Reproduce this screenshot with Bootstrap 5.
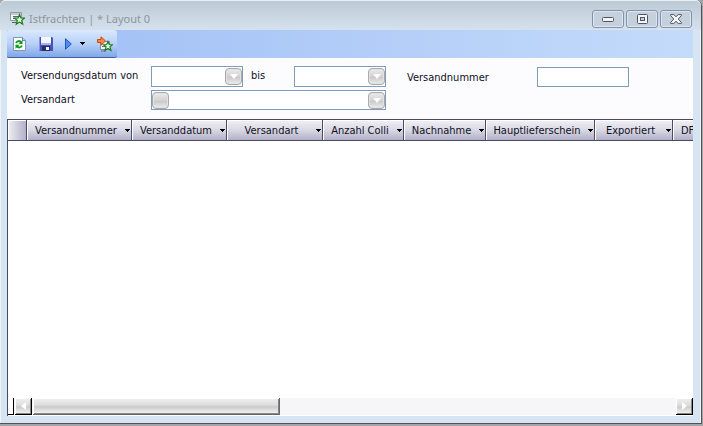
<!DOCTYPE html>
<html lang="de">
<head>
<meta charset="utf-8">
<meta name="viewport" content="width=device-width, initial-scale=1">
<title>Istfrachten</title>
<link href="https://cdn.jsdelivr.net/npm/bootstrap@5.3.0/dist/css/bootstrap.min.css" rel="stylesheet">
<style>
html,body{height:100%}
body{background:#a5a5a5;font:11px/14px "DejaVu Sans Condensed","Noto Sans",sans-serif;color:#10101c;padding:0 1px 2px 0}
svg{display:block;flex:none}
button{padding:0;border:0;background:none;color:inherit;font:inherit}
.win{background:#d7e4f1;border:solid #505256;border-width:0 1px 1px 0;border-radius:6px 6px 0 0;box-shadow:inset 1px 1px #edf3f8,inset -1px 0 #edf3f8;padding:0 8px 7px 7px}
.titlebar{height:30px;margin:0 -8px 0 -7px;padding:6px 9px 0 9px;background:linear-gradient(#bccad6,#d5e2ed);border-top:1px solid #e8eef3;border-radius:6px 6px 0 0}
.titlebar h1{font:11px/16px "Noto Sans",sans-serif;color:#8f959d}
.winbtns{gap:2px}
.winbtn{width:32px;height:18px;border:1px solid #8491ad;border-radius:3px;box-shadow:inset 0 0 0 1px #dce6ef;background:#c4d1dd}
.tools{height:28px;background:linear-gradient(90deg,#9fbef5,#c4dbfa)}
.strip{width:110px;height:28px;padding:0 4px;background:linear-gradient(#d9e8fd,#b8d1f8 50%,#80a7e7);border-bottom:1px solid #3b619c;border-radius:2px 3px 3px 2px}
.divider{width:1px;height:14px;background:#6a8ccb;box-shadow:1px 1px #fff}
.filters{height:61px;padding:8px 14px 0;background:#fcfcff}
.fgrid{display:grid;grid-template-columns:130px 92px 51px 92px;grid-template-rows:21px 20px;row-gap:3px}
.fgrid label{line-height:19px}
.bis{padding-left:8px}
.box{border:1px solid #7f9db9;background:#fff;min-width:0}
.box input{border:0;outline:0;min-width:0;width:100%;height:100%;padding:0 3px;background:none}
.wide{grid-column:2/5}
.chip{width:17px;height:17px;flex:none;border:1px solid #aaa;border-radius:4px;background:linear-gradient(#ececec,#d2d2d2 50%,#c6c6c6 51%,#eee);box-shadow:inset 0 0 0 1px #e2e2e2}
.num{margin-left:21px;padding-top:1px}
.num label{width:130px;line-height:21px}
.num input{width:92px;height:20px;padding:0 3px;border:1px solid #7f9db9;border-radius:0;background:#fff}
.sheet{background:#fff;border-left:1px solid #4b4964;overflow:hidden}
.sheet table{table-layout:fixed;width:760px;border-collapse:separate;border-spacing:0}
.sheet th{height:22px;padding:0;border:solid #4b4964;border-width:1px 1px 1px 0;background:linear-gradient(#f1f1f5,#d9d8e4 50%,#b2b0c8);font-weight:400;box-shadow:inset 1px 1px #fff}
.sheet th.corner{background:linear-gradient(90deg,#efeff4,#b1b0c8)}
.sheet th button{height:20px;padding:1px 1px 0 0}
.hscroll{height:18px;background:#f6f6f8;border-bottom:1px solid #fff}
.sb{border:solid #000;border-width:0 1px 1px 0;background:linear-gradient(#f1f1f1,#dcdcdc 45%,#cbcbcb 55%,#f6f6f6);box-shadow:inset 1px 1px #fff,inset -1px -1px #888}
.arrow{width:17px;height:17px}
.grip{width:36%;height:17px;margin-left:1px;border:solid #666;border-width:0 1px 1px 0}
.pin{width:6px;height:17px;background:#fff;border:solid #000;border-width:0 1px 1px 0;margin-right:1px}
</style>
</head>
<body>
<main class="win d-flex flex-column h-100">
  <header class="titlebar d-flex align-items-center">
    <svg width="16" height="16" viewBox="0 0 16 16"><path d="M1.500 1.500h11v8h-11z" fill="#f4f6f8" stroke="#9298a0"/><path d="M2 2h10v2H2z" fill="#c5ccd4"/><path d="M4 5.500h6M4 7.500h4M3 11.500h5" stroke="#5c6269"/><path d="M10.500 3.500l1.400 3.400 3.600.2-2.800 2.300 1 3.700-3.200-2-3.200 2 1-3.700-2.800-2.300 3.600-.2z" fill="#dfffd0" stroke="#167a25" stroke-width="1.200"/></svg>
    <h1 class="fw-normal mb-0 ms-1 me-auto">Istfrachten | * Layout 0</h1>
    <div class="winbtns d-flex">
      <button class="winbtn d-flex align-items-center justify-content-center" aria-label="Minimieren"><svg width="12" height="6" viewBox="0 0 12 6"><rect x=".5" y="1.500" width="11" height="4" rx="1" fill="#f3f3f3" stroke="#50536a"/></svg></button>
      <button class="winbtn d-flex align-items-center justify-content-center" aria-label="Maximieren"><svg width="11" height="10" viewBox="0 0 11 10"><rect x=".5" y=".5" width="10" height="9" rx="1" fill="#f6f6f6" stroke="#50536a"/><rect x="3.500" y="3.500" width="4" height="3" fill="#c4d1dd" stroke="#50536a"/></svg></button>
      <button class="winbtn d-flex align-items-center justify-content-center" aria-label="Schließen"><svg width="12" height="10" viewBox="0 0 12 10"><path d="M.6.6h3.200L6 2.700 8.200.6h3.200v1L8.200 5l3.200 3.400v1H8.200L6 7.300 3.800 9.400H.6v-1L3.800 5 .6 1.600z" fill="#f6f6f6" stroke="#50536a"/></svg></button>
    </div>
  </header>

  <nav class="tools flex-shrink-0" aria-label="Werkzeuge">
    <div class="strip d-flex align-items-center">
      <button aria-label="Aktualisieren"><svg width="16" height="16" viewBox="0 0 16 16"><path d="M2.500 1.500h9l3 3v10h-12z" fill="#fafff8" stroke="#8297bb"/><path d="M11.500 1.500v3h3" fill="#bcd4f2" stroke="#6a87b5"/><path d="M5 7c1-2.500 4-2.500 5-.8M11 9.500c-1 2.500-4 2.500-5 .8" fill="none" stroke="#0c9a1c" stroke-width="1.800"/><path d="M11.500 4v4h-4zM4.500 12.800v-4h4z" fill="#0c9a1c"/></svg></button>
      <button class="ms-2 ps-1" aria-label="Speichern"><svg width="14" height="14" viewBox="0 0 14 14"><path d="M0 1l1-1h12l1 1v13H1l-1-1z" fill="#4650b8"/><path d="M2 0h10v7H2z" fill="#f4f7ff"/><path d="M2 6h10v2H2z" fill="#a6b2ea"/><path d="M3 9h8v5H3z" fill="#292d68"/><path d="M7 10h3v3H7z" fill="#f1f3ff"/><path d="M0 1h1v12H0z" fill="#8992e1"/></svg></button>
      <button class="ms-2 ps-1" aria-label="Ausführen"><svg width="7" height="12" viewBox="0 0 7 12"><path d="M.5.7L6.300 6 .5 11.300z" fill="#4e8cf0" stroke="#2058c8"/></svg></button>
      <button class="ms-2" aria-label="Optionen"><svg width="5" height="3" viewBox="0 0 5 3" shape-rendering="crispEdges"><path d="M0 0h5L2.500 3z"/></svg></button>
      <span class="divider ms-1"></span>
      <button class="ms-2" aria-label="Layout übernehmen"><svg width="16" height="16" viewBox="0 0 16 16"><path d="M3.500 5.500h9v8h-9z" fill="#edf0f5" stroke="#848ba0"/><path d="M5 10.500h4M4 15h5" stroke="#666c7b"/><path d="M.5 3.500H4V.8L8.500 5 4 9.200V6.500H.5z" fill="#ff8a38" stroke="#c54a10"/><path d="M11 5.500l1.300 3 3.200.2-2.500 2.100.9 3.600-2.900-1.900-2.900 1.900.9-3.600-2.500-2.100 3.200-.2z" fill="#dfffd0" stroke="#167a25" stroke-width="1.200"/></svg></button>
    </div>
  </nav>

  <form class="filters d-flex flex-shrink-0">
    <div class="fgrid">
      <label for="from">Versendungsdatum von</label>
      <div class="box d-flex align-items-center"><input id="from" type="text"><button type="button" class="chip d-flex align-items-center justify-content-center" aria-label="Datum von wählen"><svg width="8" height="5" viewBox="0 0 8 5"><path d="M0 0h8L4 5z" fill="#fff"/></svg></button></div>
      <label class="bis" for="to">bis</label>
      <div class="box d-flex align-items-center"><input id="to" type="text"><button type="button" class="chip d-flex align-items-center justify-content-center" aria-label="Datum bis wählen"><svg width="8" height="5" viewBox="0 0 8 5"><path d="M0 0h8L4 5z" fill="#fff"/></svg></button></div>
      <label for="kind">Versandart</label>
      <div class="box wide d-flex align-items-center"><button type="button" class="chip" aria-label="Auswahl"></button><input id="kind" type="text"><button type="button" class="chip d-flex align-items-center justify-content-center" aria-label="Versandart wählen"><svg width="8" height="5" viewBox="0 0 8 5"><path d="M0 0h8L4 5z" fill="#fff"/></svg></button></div>
    </div>
    <div class="num d-flex align-items-start"><label for="number">Versandnummer</label><input id="number" type="text"></div>
  </form>

  <section class="sheet flex-grow-1 d-flex flex-column">
    <table>
      <colgroup><col style="width:19px"><col style="width:105px"><col style="width:95px"><col style="width:96px"><col style="width:81px"><col style="width:82px"><col style="width:109px"><col style="width:78px"><col></colgroup>
      <thead><tr>
        <th class="corner"></th>
        <th><button class="d-flex align-items-center w-100"><span class="flex-grow-1">Versandnummer</span><svg width="5" height="3" viewBox="0 0 5 3" shape-rendering="crispEdges"><path d="M0 0h5L2.500 3z"/></svg></button></th>
        <th><button class="d-flex align-items-center w-100"><span class="flex-grow-1">Versanddatum</span><svg width="5" height="3" viewBox="0 0 5 3" shape-rendering="crispEdges"><path d="M0 0h5L2.500 3z"/></svg></button></th>
        <th><button class="d-flex align-items-center w-100"><span class="flex-grow-1">Versandart</span><svg width="5" height="3" viewBox="0 0 5 3" shape-rendering="crispEdges"><path d="M0 0h5L2.500 3z"/></svg></button></th>
        <th><button class="d-flex align-items-center w-100"><span class="flex-grow-1">Anzahl Colli</span><svg width="5" height="3" viewBox="0 0 5 3" shape-rendering="crispEdges"><path d="M0 0h5L2.500 3z"/></svg></button></th>
        <th><button class="d-flex align-items-center w-100"><span class="flex-grow-1">Nachnahme</span><svg width="5" height="3" viewBox="0 0 5 3" shape-rendering="crispEdges"><path d="M0 0h5L2.500 3z"/></svg></button></th>
        <th><button class="d-flex align-items-center w-100"><span class="flex-grow-1">Hauptlieferschein</span><svg width="5" height="3" viewBox="0 0 5 3" shape-rendering="crispEdges"><path d="M0 0h5L2.500 3z"/></svg></button></th>
        <th><button class="d-flex align-items-center w-100"><span class="flex-grow-1">Exportiert</span><svg width="5" height="3" viewBox="0 0 5 3" shape-rendering="crispEdges"><path d="M0 0h5L2.500 3z"/></svg></button></th>
        <th><button class="d-flex align-items-center w-100"><span class="ps-2">DF</span></button></th>
      </tr></thead>
    </table>
    <div class="hscroll d-flex mt-auto">
      <span class="pin"></span>
      <button class="sb arrow d-flex align-items-center justify-content-center" aria-label="Nach links"><svg width="5" height="8" viewBox="0 0 5 8"><path d="M5 0v8L0 4z" fill="#fff"/></svg></button>
      <div class="sb grip"></div>
      <button class="sb arrow d-flex align-items-center justify-content-center ms-auto" aria-label="Nach rechts"><svg width="5" height="8" viewBox="0 0 5 8"><path d="M0 0v8l5-4z" fill="#fff"/></svg></button>
    </div>
  </section>
</main>
<script src="https://cdn.jsdelivr.net/npm/bootstrap@5.3.0/dist/js/bootstrap.bundle.min.js"></script>
</body>
</html>
